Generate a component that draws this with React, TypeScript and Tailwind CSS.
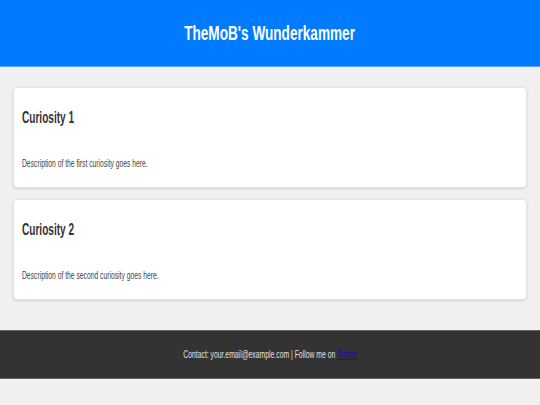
export default function App() {
  const curiosities = [
    { title: 'Curiosity 1', text: 'Description of the first curiosity goes here.' },
    { title: 'Curiosity 2', text: 'Description of the second curiosity goes here.' },
  ]

  return (
    <div className="min-h-screen bg-[#f0f0f0] font-['Liberation_Sans',Arial,sans-serif]">
      {/* Header */}
      <header className="h-[67px] bg-[#007bff] flex items-center justify-center border-b border-[#5aa6ff]">
        <h1 className="text-[20px] leading-6 font-bold text-white">
          <span className="inline-block scale-x-[0.68] origin-center whitespace-nowrap">TheMoB's Wunderkammer</span>
        </h1>
      </header>

      {/* Cards */}
      <main className="px-[13px] pt-5 flex flex-col gap-[11px]">
        {curiosities.map((c) => (
          <section
            key={c.title}
            className="h-[101px] bg-white border border-[#e3e3e3] rounded shadow-sm px-2 pt-5"
          >
            <h2 className="text-[16px] leading-5 font-bold text-[#333]">
              <span className="inline-block scale-x-[0.63] origin-left whitespace-nowrap">{c.title}</span>
            </h2>
            <p className="mt-[29px] text-[10px] leading-[14px] text-[#444]">
              <span className="inline-block scale-x-[0.675] origin-left whitespace-nowrap">{c.text}</span>
            </p>
          </section>
        ))}
      </main>

      {/* Footer */}
      <footer className="mt-[30px] h-[49px] bg-[#333] border-y border-[#666] flex items-center justify-center text-[11px] text-[#e0e0e0]">
        <span className="inline-block scale-x-[0.62] origin-center whitespace-nowrap">
          Contact: your.email@example.com | Follow me on{' '}
          <a href="#" className="text-[#1a0dab] underline">Twitter</a>
        </span>
      </footer>
    </div>
  )
}
